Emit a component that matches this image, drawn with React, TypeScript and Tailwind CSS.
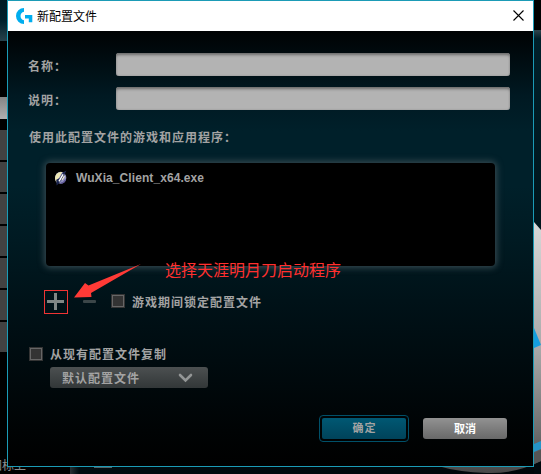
import type { ReactNode } from "react";

const LABEL = "text-[12px] leading-[16px] font-bold tracking-[1px] text-[#a3a3a3] whitespace-nowrap";

function Field({ label }: { label: string }) {
  return (
    <label className="flex h-[23px] items-center">
      <span className={`${LABEL} w-[88px] shrink-0 pt-[4px]`}>{label}</span>
      <input
        aria-label={label}
        className="h-[23px] w-[394px] rounded-[3px] bg-[#b3b3b3] px-2 text-[12px] shadow-[inset_0_3px_3px_-1px_#6c6c6c,inset_0_0_2px_#888] outline-none"
      />
    </label>
  );
}

function CheckRow({ children }: { children: ReactNode }) {
  return (
    <div className="flex items-center gap-[7px]">
      <span className="mt-[-2px] h-[14px] w-[14px] shrink-0 border border-[#343434] bg-[#333] shadow-[inset_0_0_0_1px_#666]" />
      <span className={`${LABEL} pt-px`}>{children}</span>
    </div>
  );
}

function LogitechMark() {
  return (
    <svg className="h-[16px] w-[17px] shrink-0" viewBox="0 0 17 16" fill="#00adee">
      <path d="M8 0v3.7A4.4 4.4 0 0 0 8 12.3V16A8 8 0 0 1 8 0Z" />
      <path d="M9 7H16.3V14.3H12.8V10.6H9Z" />
    </svg>
  );
}

function GameIcon() {
  return (
    <svg className="h-[16px] w-[16px] shrink-0" viewBox="0 0 16 16">
      <ellipse cx="7.7" cy="7.8" rx="5.6" ry="6" fill="#8f90bd" />
      <path d="M2.1 9C1.6 4.8 5 1.3 9.3 2L5 9.8 4.5 13.4C3.2 12.4 2.4 11 2.1 9Z" fill="#eee8b5" />
      <path d="M3.2 9.8 6.6 8l3.3-5.5L13.4.6 9.7 8.4 5.5 13.7 3.6 15.5Z" fill="#1c2650" />
      <path d="m6 11.4 4.1-7" stroke="#fff" strokeWidth="1.5" />
      <path d="m9 9.8 2.4-3.6" stroke="#e9e5d0" strokeWidth="1.3" />
      <path d="M7.7 13.2c2.1-.2 4-1.6 4.9-3.8" fill="none" stroke="#5f5798" strokeWidth="1.3" />
    </svg>
  );
}

function Backdrop() {
  return (
    <div className="absolute inset-0 overflow-hidden bg-black">
      <div className="flex w-[7px] flex-col">
        <div className="h-[41px] bg-gradient-to-b from-[#001a23] via-[#00202b] to-[#26414b]" />
        <div className="mt-[56px] h-[22px] bg-gradient-to-b from-[#858585] to-[#b0b0b0]" />
        <div className="mt-[11px] flex flex-col gap-[2px]">
          {[0, 1, 2, 3, 4, 5, 6].map((row) => (
            <div key={row} className="h-[30px] bg-[#424242]" />
          ))}
        </div>
      </div>
      <span className="absolute top-[459px] left-[-10px] text-[12px] leading-[14px] whitespace-nowrap text-[#8c8c8c]">图标上</span>
      <div className="absolute top-[466px] left-[70px] h-[8px] w-[471px] bg-gradient-to-r from-[#293236] from-0% via-[#000c10] via-2% to-[#000609]" />
      <div className="absolute top-[467px] left-[94px] h-px w-[18px] bg-[#536368]" />
      <div className="absolute top-[30px] left-[534px] h-[444px] w-[7px] bg-gradient-to-b from-[#30454d] via-[#00202a] via-2% to-[#00080c]" />
      <svg className="absolute top-[200px] left-[430px]" width="111" height="274" viewBox="0 0 111 274">
        <defs>
          <linearGradient id="shell" x1="0" y1="0" x2="0" y2="1">
            <stop offset="0" stopColor="#d8d8d8" />
            <stop offset="0.5" stopColor="#aaa" />
            <stop offset="0.82" stopColor="#717171" />
            <stop offset="1" stopColor="#484848" />
          </linearGradient>
        </defs>
        <path d="M104 22 111 30V261Q85 274 57 273 28 272 8 266H104Z" fill="url(#shell)" />
        <path d="M104 128 111 145 104 148Z" fill="#149ee0" />
        <path d="M104 244 111 241V249L104 252Z" fill="#2594c8" />
        <path d="M104 253 111 250V261L104 264Z" fill="#555" />
      </svg>
    </div>
  );
}

export default function App() {
  return (
    <div className="relative h-[474px] w-[541px] overflow-hidden font-['Liberation_Sans','Noto_Sans_CJK_SC',sans-serif]">
      <Backdrop />
      <div className="absolute top-0 left-[7px] flex h-[467px] w-[527px] flex-col border border-[#1b9bb6]">
        <header className="flex h-[30px] shrink-0 items-center bg-white pr-[9px] pl-[8px]">
          <LogitechMark />
          <h1 className="ml-[4px] pt-px text-[12px] leading-[16px] text-black">新配置文件</h1>
          <svg className="mt-[-1px] ml-auto h-[11px] w-[11px]" viewBox="0 0 11 11" stroke="#000" strokeWidth="1.1">
            <path d="m.5.5 10 10m0-10-10 10" />
          </svg>
        </header>
        <main className="flex min-h-0 flex-1 flex-col bg-[linear-gradient(180deg,#000203_0,#000b0f_25px,#001922_65px,#00202a_100px,#00202a_155px,#001a22_210px,#001218_270px,#000b0f_330px,#000304_400px,#000_435px)] pt-[22px] pl-[20px]">
          <div className="flex flex-col gap-[11px]">
            <Field label="名称：" />
            <Field label="说明：" />
          </div>
          <p className={`${LABEL} mt-[20px] ml-px`}>使用此配置文件的游戏和应用程序：</p>
          <div className="mt-[17px] ml-[18px] h-[103px] w-[449px] shrink-0 rounded-[4px] bg-black pt-[6px] pl-[7px] shadow-[0_0_6px_2px_#34484f]">
            <div className="flex items-center gap-[7px]">
              <GameIcon />
              <span className="text-[12px] leading-[18px] font-bold tracking-[0.08px] text-[#a3a3a3]">WuXia_Client_x64.exe</span>
            </div>
          </div>
          <div className="mt-[24px] ml-[16px] flex h-[24px] items-center">
            <button className="flex h-[24px] w-[24px] items-center justify-center border border-[#f03434]">
              <svg className="mt-[-1px] mr-[1px]" width="17" height="17" viewBox="0 0 17 17" stroke="#808786" strokeWidth="3" strokeLinejoin="round">
                <path d="M8.5 0v17M0 8.5h17" />
              </svg>
            </button>
            <span className="mt-[-1px] ml-[15px] h-[3px] w-[13px] rounded-[1px] bg-[#3b4648]" />
            <div className="ml-[15px]">
              <CheckRow>游戏期间锁定配置文件</CheckRow>
            </div>
          </div>
          <div className="mt-[32px] ml-px">
            <CheckRow>从现有配置文件复制</CheckRow>
          </div>
          <button className="mt-[4px] ml-[22px] flex h-[21px] w-[158px] shrink-0 items-center justify-between rounded-[3px] bg-gradient-to-b from-[#4c5051] to-[#323738] pr-[15px] pl-[12px]">
            <span className={`${LABEL} pt-[2px]`}>默认配置文件</span>
            <svg width="15" height="10" viewBox="0 0 15 10" fill="none" stroke="#939696" strokeWidth="2.6" strokeLinecap="round">
              <path d="m2 2 5.5 5.5L13 2" />
            </svg>
          </button>
          <div className="mt-[27px] mr-[26px] flex items-center justify-end gap-[14px]">
            <button className="h-[27px] w-[90px] rounded-[4px] border border-[#005069] p-[2px]">
              <span className="flex h-[21px] items-center justify-center rounded-[2px] bg-gradient-to-b from-[#005873] to-[#00435a] pl-px text-[11px] font-bold tracking-[1px] text-[#a3a3a3]">确定</span>
            </button>
            <button className="h-[21px] w-[84px] rounded-[3px] bg-gradient-to-b from-[#929292] to-[#696969] text-[11px] leading-[20px] font-bold text-white">取消</button>
          </div>
        </main>
      </div>
      <svg className="absolute top-[262px] left-[72px]" width="72" height="38" viewBox="0 0 72 38">
        <path d="M2 35.5 13 21 16.5 23.5 69 2 19 31 19.5 35Z" fill="#ff3a36" />
      </svg>
      <span className="absolute top-[260px] left-[165px] text-[16px] leading-[22px] whitespace-nowrap text-[#ff302f]">选择天涯明月刀启动程序</span>
    </div>
  );
}
